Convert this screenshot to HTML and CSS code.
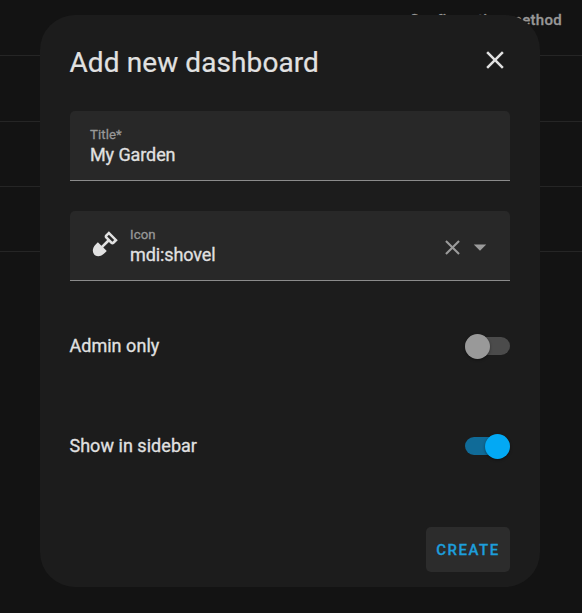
FILE: index.html
```html
<!DOCTYPE html>
<html lang="en">
<head>
<meta charset="utf-8">
<title>Add new dashboard</title>
<link rel="stylesheet" href="styles.css">
</head>
<body>
<div class="table" aria-hidden="true">
  <div class="table-head">Configuration method</div>
  <div class="table-row"></div>
  <div class="table-row short"></div>
  <div class="table-row short"></div>
</div>
<div class="scrim">
  <main class="dialog" role="dialog" aria-labelledby="heading">
    <header class="header">
      <h1 id="heading">Add new dashboard</h1>
      <button class="icon-button" aria-label="Close"><svg class="close" viewBox="0 0 24 24"><path d="M19,6.41L17.59,5L12,10.59L6.41,5L5,6.41L10.59,12L5,17.59L6.41,19L12,13.41L17.59,19L19,17.59L13.41,12L19,6.41Z"/></svg></button>
    </header>
    <div class="field">
      <div class="text"><span class="label">Title*</span><span class="value">My Garden</span></div>
    </div>
    <div class="field">
      <svg class="shovel" viewBox="0 0 24 24"><path fill-rule="evenodd" d="M15.1,1.81L12.27,4.64C11.5,5.42 11.5,6.69 12.27,7.47L13.68,8.88L9.13,13.43L6.31,10.6L4.89,12C-0.06,17 3.5,20.5 3.5,20.5C3.5,20.5 7,24 12,19.09L13.41,17.68L10.61,14.88L15.15,10.34L16.54,11.73C17.32,12.5 18.59,12.5 19.37,11.73L22.2,8.9L15.1,1.81M17.93,10.28L13.71,6.06L15.12,4.65L19.35,8.88L17.93,10.28Z"/></svg>
      <div class="text"><span class="label">Icon</span><span class="value">mdi:shovel</span></div>
      <svg class="clear" viewBox="0 0 24 24"><path d="M19,6.41L17.59,5L12,10.59L6.41,5L5,6.41L10.59,12L5,17.59L6.41,19L12,13.41L17.59,19L19,17.59L13.41,12L19,6.41Z"/></svg>
      <svg class="arrow" viewBox="0 0 24 24"><path d="M7,10L12,15L17,10H7Z"/></svg>
    </div>
    <div class="setting"><span class="name">Admin only</span><span class="switch"><span class="thumb"></span></span></div>
    <div class="setting"><span class="name">Show in sidebar</span><span class="switch on"><span class="thumb"></span></span></div>
    <footer class="actions"><button class="create">CREATE</button></footer>
  </main>
</div>
</body>
</html>
```
FILE: styles.css
```css
* { box-sizing: border-box; }
body {
  margin: 0;
  height: 613px;
  overflow: hidden;
  background: #131313;
  color: #e1e1e1;
  font-family: Roboto, sans-serif;
}
button { border: 0; padding: 0; font: inherit; }
svg { display: block; fill: currentColor; flex: none; }
.table-head {
  height: 56px;
  padding: 10px 20px 0 0;
  border-bottom: 1px solid #252525;
  color: #979797;
  font-size: 15px;
  font-weight: 500;
  line-height: 20px;
  letter-spacing: 0.3px;
  text-align: right;
  -webkit-text-stroke: 0.3px;
}
.table-row { height: 66px; border-bottom: 1px solid #252525; }
.table-row.short { height: 65px; }
.scrim { position: absolute; inset: 0; padding: 15px 42px 26px 40px; }
.dialog {
  width: 500px;
  height: 572px;
  padding: 15px 30px;
  border-radius: 35px;
  background: #1c1c1c;
}
.header { display: flex; height: 81px; justify-content: space-between; }
h1 {
  margin: 15px 0 0 -0.5px;
  font-size: 28px;
  font-weight: 400;
  line-height: 36px;
  letter-spacing: 0.09px;
  -webkit-text-stroke: 0.2px;
}
.icon-button { width: 30px; height: 30px; background: none; color: inherit; margin-top: 15px; }
.close { width: 30px; height: 30px; }
.field {
  display: flex;
  height: 70px;
  margin-bottom: 30px;
  padding: 0 15px 0 20px;
  border-bottom: 1px solid #8b8b8b;
  border-radius: 5px 5px 0 0;
  background: #282828;
}
.text { display: flex; flex: 1; flex-direction: column; padding-top: 15px; }
.label { color: #989898; font-size: 13.2px; line-height: 17px; letter-spacing: 0.1px; -webkit-text-stroke: 0.3px; }
.value { font-size: 18px; line-height: 23px; letter-spacing: -0.1px; -webkit-text-stroke: 0.3px; }
.shovel { width: 30px; height: 30px; margin: 18px 10px 0 0; }
.clear { width: 25px; height: 25px; margin: 24px 0 0; color: #9b9b9b; }
.arrow { width: 30px; height: 30px; margin: 21px 0 0; color: #9b9b9b; }
.setting {
  display: flex;
  height: 70px;
  margin-bottom: 30px;
  align-items: center;
  justify-content: space-between;
  font-size: 18px;
}
.name { margin: 0 0 2px -0.6px; letter-spacing: 0.04px; -webkit-text-stroke: 0.3px; }
.switch {
  display: flex;
  width: 45px;
  height: 18px;
  align-items: center;
  border-radius: 9px;
  background: #4b4b4b;
}
.thumb {
  width: 25px;
  height: 25px;
  border-radius: 50%;
  background: #999;
  box-shadow: 0 1px 3px #0006;
}
.switch.on { justify-content: flex-end; background: #106b98; }
.on .thumb { background: #03a9f4; }
.actions { display: flex; justify-content: flex-end; padding-top: 16px; }
.create {
  width: 84px;
  height: 45px;
  border-radius: 5px;
  background: #2c2c2c;
  color: #1d9edb;
  font-size: 15px;
  font-weight: 500;
  letter-spacing: 1.5px;
  -webkit-text-stroke: 0.3px;
}
```
